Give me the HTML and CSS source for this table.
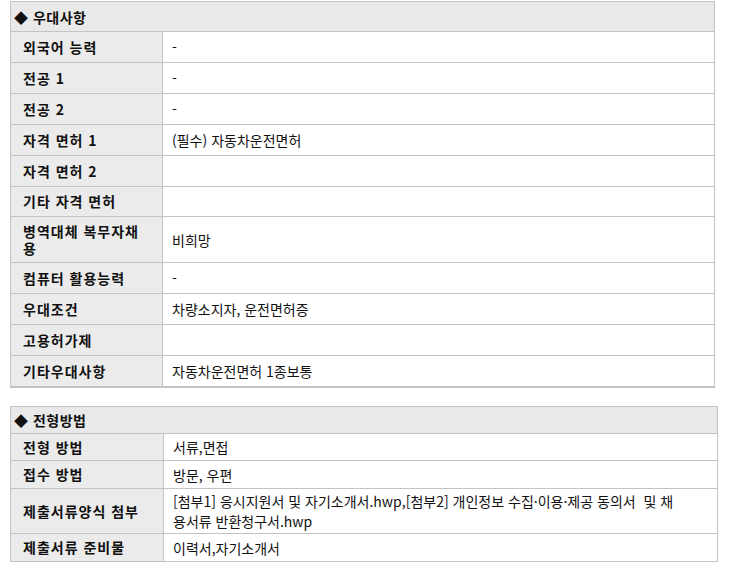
FILE: index.html
```html
<!DOCTYPE html>
<html lang="ko">
<head>
<meta charset="utf-8">
<link rel="stylesheet" href="styles.css">
</head>
<body>
<section class="info info-pref">
  <div class="head">◆ 우대사항</div>
  <div class="row"><div class="label">외국어 능력</div><div class="value">-</div></div>
  <div class="row"><div class="label">전공 1</div><div class="value">-</div></div>
  <div class="row"><div class="label">전공 2</div><div class="value">-</div></div>
  <div class="row"><div class="label">자격 면허 1</div><div class="value">(필수) 자동차운전면허</div></div>
  <div class="row"><div class="label">자격 면허 2</div><div class="value"></div></div>
  <div class="row r30"><div class="label">기타 자격 면허</div><div class="value"></div></div>
  <div class="row tall"><div class="label">병역대체 복무자채용</div><div class="value">비희망</div></div>
  <div class="row"><div class="label">컴퓨터 활용능력</div><div class="value">-</div></div>
  <div class="row"><div class="label">우대조건</div><div class="value">차량소지자, 운전면허증</div></div>
  <div class="row"><div class="label">고용허가제</div><div class="value"></div></div>
  <div class="row last"><div class="label">기타우대사항</div><div class="value">자동차운전면허 1종보통</div></div>
</section>

<section class="info info-method">
  <div class="head">◆ 전형방법</div>
  <div class="row r27"><div class="label">전형 방법</div><div class="value">서류,면접</div></div>
  <div class="row"><div class="label">접수 방법</div><div class="value">방문, 우편</div></div>
  <div class="row tall"><div class="label">제출서류양식 첨부</div><div class="value">[첨부1] 응시지원서 및 자기소개서.hwp,[첨부2] 개인정보 수집·이용·제공 동의서&nbsp; 및 채용서류 반환청구서.hwp</div></div>
  <div class="row"><div class="label">제출서류 준비물</div><div class="value">이력서,자기소개서</div></div>
</section>
</body>
</html>
```

FILE: styles.css
```css
html, body {
  margin: 0;
  padding: 0;
  background: #ffffff;
}
body {
  font-family: "Noto Sans CJK KR", "Noto Sans", sans-serif;
  font-size: 14px;
  color: #111111;
}
.info {
  box-sizing: border-box;
  margin-left: 10px;
  border: 1px solid #c3c3c3;
  border-bottom: none;
}
.info .head {
  box-sizing: border-box;
  display: flex;
  align-items: center;
  background: #e9e9e9;
  border-bottom: 1px solid #c3c3c3;
  padding-left: 3px;
  font-weight: bold;
  letter-spacing: 0.5px;
}
.info .row {
  box-sizing: border-box;
  display: grid;
  border-bottom: 1px solid #c3c3c3;
}
.info .label,
.info .value {
  display: flex;
  align-items: center;
}
.info .label {
  box-sizing: border-box;
  background: #ebebeb;
  border-right: 1px solid #c3c3c3;
  padding: 0 10px 0 12px;
  font-weight: bold;
  letter-spacing: 1px;
  line-height: 17px;
}
.info .value {
  padding: 0 36px 0 9px;
  line-height: 20px;
  word-break: break-all;
}

/* 우대사항 */
.info-pref {
  width: 705px;
  margin-top: 1px;
}
.info-pref .head { height: 30px; }
.info-pref .row {
  grid-template-columns: 152px 1fr;
  height: 31px;
}
.info-pref .row.r30 { height: 30px; }
.info-pref .row.tall { height: 46px; }
.info-pref .row.last {
  border-bottom-width: 2px;
  height: 32px;
}

/* 전형방법 */
.info-method {
  width: 708px;
  margin-top: 18px;
}
.info-method .head { height: 27px; }
.info-method .row {
  grid-template-columns: 153px 1fr;
  height: 28px;
}
.info-method .row.r27 { height: 27px; }
.info-method .row.tall { height: 45px; }
```
